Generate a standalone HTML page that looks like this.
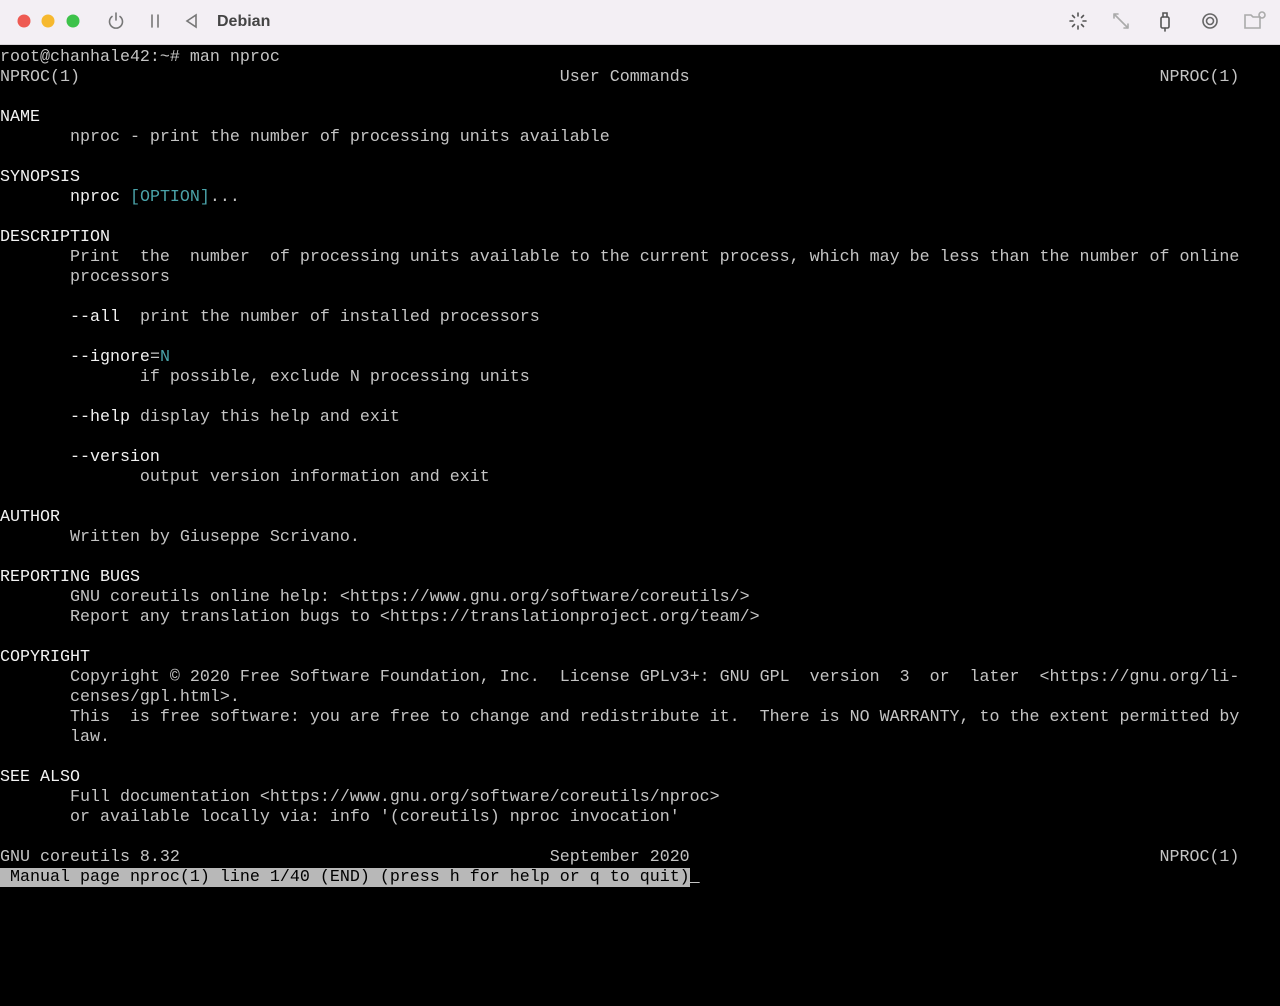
<!DOCTYPE html>
<html><head><meta charset="utf-8"><style>
html,body{margin:0;padding:0;width:1280px;height:1006px;overflow:hidden;background:#000}
.bar{position:absolute;left:0;top:0;width:1280px;height:44px;background:#f3eff4;border-bottom:1px solid #d8d4d8}
.term{position:absolute;left:0;top:48px;width:1280px;height:958px;background:#000}
pre{margin:0;font-family:"Liberation Mono","DejaVu Sans Mono",monospace;font-size:16.67px;line-height:20px;color:#c4c4c4;white-space:pre}
b{color:#f2f2f2;font-weight:normal}
.c{color:#4aa2a8}
.st{background:#b8b8b8;color:#000}
.title{position:absolute;left:217px;top:13px;font:bold 16px "Liberation Sans",sans-serif;color:#444}
</style></head><body>
<div class="bar">
<svg width="1280" height="44" style="position:absolute;left:0;top:0">
<circle cx="24" cy="21" r="6.5" fill="#ee5a52"/>
<circle cx="48" cy="21" r="6.5" fill="#f6b82e"/>
<circle cx="73" cy="21" r="6.5" fill="#3dc24a"/>
<g stroke="#777" stroke-width="1.6" fill="none" stroke-linecap="round">
<path d="M112 16.5 A6.5 6.5 0 1 0 120 16.5"/><path d="M116 13v7"/>
<path d="M152 15v12M158 15v12"/>
<path d="M196 15v12l-9-6z"/>
<path d="M1078 13v3M1078 26v3M1070 21h3M1083 21h3M1072.5 15.5l2 2M1081.5 24.5l2 2M1072.5 26.5l2-2M1081.5 17.5l2-2" stroke="#555"/>
<path d="M1114 14l14 14M1114 14h4M1114 14v4M1128 28h-4M1128 28v-4" stroke="#aaa"/>
<rect x="1161" y="17" width="8" height="11" rx="1.5" stroke="#555"/><path d="M1163 17v-4h4v4M1165 28v3" stroke="#555"/>
<circle cx="1210" cy="21" r="7" stroke="#666"/><circle cx="1210" cy="21" r="3.5" stroke="#666"/>
<path d="M1245 15h6l2 2h7v11h-15z" stroke="#aaa"/><circle cx="1262" cy="15" r="3" stroke="#aaa"/>
</g>
</svg>
<div class="title">Debian</div>
</div>
<div class="term"><pre>root@chanhale42:~# man nproc
NPROC(1)                                                User Commands                                               NPROC(1)

<b>NAME</b>
       nproc - print the number of processing units available

<b>SYNOPSIS</b>
       <b>nproc</b> <span class="c">[OPTION]</span>...

<b>DESCRIPTION</b>
       Print  the  number  of processing units available to the current process, which may be less than the number of online
       processors

       <b>--all</b>  print the number of installed processors

       <b>--ignore</b>=<span class="c">N</span>
              if possible, exclude N processing units

       <b>--help</b> display this help and exit

       <b>--version</b>
              output version information and exit

<b>AUTHOR</b>
       Written by Giuseppe Scrivano.

<b>REPORTING BUGS</b>
       GNU coreutils online help: &lt;https://www.gnu.org/software/coreutils/&gt;
       Report any translation bugs to &lt;https://translationproject.org/team/&gt;

<b>COPYRIGHT</b>
       Copyright © 2020 Free Software Foundation, Inc.  License GPLv3+: GNU GPL  version  3  or  later  &lt;https://gnu.org/li-
       censes/gpl.html&gt;.
       This  is free software: you are free to change and redistribute it.  There is NO WARRANTY, to the extent permitted by
       law.

<b>SEE ALSO</b>
       Full documentation &lt;https://www.gnu.org/software/coreutils/nproc&gt;
       or available locally via: info '(coreutils) nproc invocation'

GNU coreutils 8.32                                     September 2020                                               NPROC(1)
<span class="st"> Manual page nproc(1) line 1/40 (END) (press h for help or q to quit)</span><span style="text-decoration:underline">&nbsp;</span></pre></div>
</body></html>
